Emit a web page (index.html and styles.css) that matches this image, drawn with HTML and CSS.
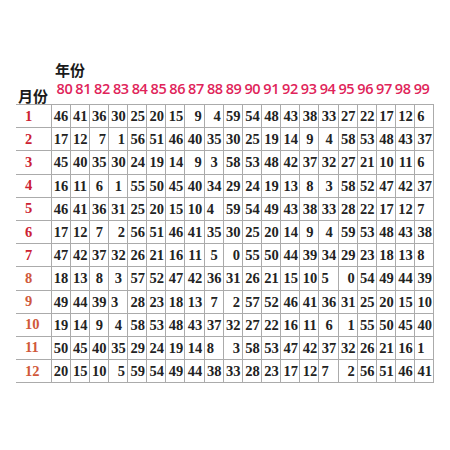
FILE: index.html
```html
<!DOCTYPE html>
<html>
<head>
<meta charset="utf-8">
<link rel="stylesheet" href="styles.css">
</head>
<body>
<div class="page">
  <div class="year-title">年份</div>
  <div class="head-row">
    <div class="month-title">月份</div>
    <div class="years">
      <span>80</span><span>81</span><span>82</span><span>83</span><span>84</span><span>85</span><span>86</span><span>87</span><span>88</span><span>89</span><span>90</span><span>91</span><span>92</span><span>93</span><span>94</span><span>95</span><span>96</span><span>97</span><span>98</span><span>99</span>
    </div>
  </div>
  <table class="grid">
    <colgroup><col class="mcol"><col span="20" class="dcol"></colgroup>
    <tr><th class="m a">1</th><td>46</td><td>41</td><td>36</td><td>30</td><td>25</td><td>20</td><td>15</td><td class="r">9</td><td class="r">4</td><td>59</td><td>54</td><td>48</td><td>43</td><td>38</td><td>33</td><td>27</td><td>22</td><td>17</td><td>12</td><td class="l">6</td></tr>
    <tr><th class="m a">2</th><td>17</td><td>12</td><td class="r">7</td><td class="r">1</td><td>56</td><td>51</td><td>46</td><td>40</td><td>35</td><td>30</td><td>25</td><td>19</td><td>14</td><td>9</td><td>4</td><td>58</td><td>53</td><td>48</td><td>43</td><td>37</td></tr>
    <tr><th class="m a">3</th><td>45</td><td>40</td><td>35</td><td>30</td><td>24</td><td>19</td><td>14</td><td class="r">9</td><td>3</td><td>58</td><td>53</td><td>48</td><td>42</td><td>37</td><td>32</td><td>27</td><td>21</td><td>10</td><td>11</td><td class="l">6</td></tr>
    <tr><th class="m a">4</th><td>16</td><td>11</td><td>6</td><td>1</td><td>55</td><td>50</td><td>45</td><td>40</td><td>34</td><td>29</td><td>24</td><td>19</td><td>13</td><td>8</td><td>3</td><td>58</td><td>52</td><td>47</td><td>42</td><td>37</td></tr>
    <tr><th class="m a">5</th><td>46</td><td>41</td><td>36</td><td>31</td><td>25</td><td>20</td><td>15</td><td>10</td><td class="l">4</td><td>59</td><td>54</td><td>49</td><td>43</td><td>38</td><td>33</td><td>28</td><td>22</td><td>17</td><td>12</td><td class="l">7</td></tr>
    <tr><th class="m a">6</th><td>17</td><td>12</td><td>7</td><td class="r">2</td><td>56</td><td>51</td><td>46</td><td>41</td><td>35</td><td>30</td><td>25</td><td>20</td><td>14</td><td>9</td><td>4</td><td>59</td><td>53</td><td>48</td><td>43</td><td>38</td></tr>
    <tr><th class="m a">7</th><td>47</td><td>42</td><td>37</td><td>32</td><td>26</td><td>21</td><td>16</td><td>11</td><td>5</td><td class="r">0</td><td>55</td><td>50</td><td>44</td><td>39</td><td>34</td><td>29</td><td>23</td><td>18</td><td>13</td><td class="l">8</td></tr>
    <tr><th class="m b">8</th><td>18</td><td>13</td><td>8</td><td>3</td><td>57</td><td>52</td><td>47</td><td>42</td><td>36</td><td>31</td><td>26</td><td>21</td><td>15</td><td>10</td><td class="l">5</td><td class="r">0</td><td>54</td><td>49</td><td>44</td><td>39</td></tr>
    <tr><th class="m b">9</th><td>49</td><td>44</td><td>39</td><td class="l">3</td><td>28</td><td>23</td><td>18</td><td>13</td><td>7</td><td class="r">2</td><td>57</td><td>52</td><td>46</td><td>41</td><td>36</td><td>31</td><td>25</td><td>20</td><td>15</td><td>10</td></tr>
    <tr><th class="m b">10</th><td>19</td><td>14</td><td>9</td><td>4</td><td>58</td><td>53</td><td>48</td><td>43</td><td>37</td><td>32</td><td>27</td><td>22</td><td>16</td><td>11</td><td>6</td><td class="r">1</td><td>55</td><td>50</td><td>45</td><td>40</td></tr>
    <tr><th class="m b">11</th><td>50</td><td>45</td><td>40</td><td>35</td><td>29</td><td>24</td><td>19</td><td>14</td><td class="l">8</td><td class="r">3</td><td>58</td><td>53</td><td>47</td><td>42</td><td>37</td><td>32</td><td>26</td><td>21</td><td>16</td><td class="l">1</td></tr>
    <tr><th class="m b">12</th><td>20</td><td>15</td><td>10</td><td class="r">5</td><td>59</td><td>54</td><td>49</td><td>44</td><td>38</td><td>33</td><td>28</td><td>23</td><td>17</td><td>12</td><td class="l">7</td><td class="r">2</td><td>56</td><td>51</td><td>46</td><td>41</td></tr>
  </table>
</div>
</body>
</html>
```
FILE: styles.css
```css
html, body {
  margin: 0;
  padding: 0;
  background: #ffffff;
}

.page {
  padding: 61px 0 0 16px;
  font-family: "Liberation Serif", "Noto Sans CJK SC", serif;
}

.year-title {
  margin-left: 39px;
  font-family: "Noto Sans CJK SC", sans-serif;
  font-weight: 700;
  font-size: 15px;
  line-height: 18px;
  height: 18px;
  color: #1a1a1a;
}

.head-row {
  display: flex;
  height: 25px;
}

.month-title {
  width: 39px;
  align-self: flex-end;
  font-family: "Noto Sans CJK SC", sans-serif;
  font-weight: 700;
  font-size: 15px;
  line-height: 16px;
  color: #1a1a1a;
  margin-left: 2px;
  margin-right: -2px;
}

.years {
  display: grid;
  grid-template-columns: repeat(20, 18.8px);
  margin-top: 2px;
  height: 16px;
  font-family: "Open Sans", sans-serif;
  font-weight: 600;
  font-size: 14.5px;
  line-height: 16px;
  color: #e0245a;
}

.years span {
  text-align: center;
  letter-spacing: -0.4px;
}

.grid {
  border-collapse: collapse;
  table-layout: fixed;
  width: 418px;
}

.mcol {
  width: 35px;
}

.dcol {
  width: 19.15px;
}

.grid tr {
  height: 23.2px;
}

.grid td {
  border: 1px solid #ababab;
  padding: 1px 0 0 1px;
  text-align: center;
  font-weight: 700;
  font-size: 14.5px;
  color: #222222;
  white-space: nowrap;
  overflow: visible;
}

.grid th.m {
  border-top: 1px solid #ababab;
  border-bottom: 1px solid #ababab;
  border-right: 1px solid #ababab;
  border-left: none;
  padding: 0 0 0 9px;
  text-align: left;
  font-weight: 700;
  font-size: 14.5px;
}

.grid th.a {
  color: #cc2233;
}

.grid th.b {
  color: #d0583a;
}

.grid td.l {
  text-align: left;
  padding-left: 2px;
}

.grid td.r {
  text-align: right;
  padding-right: 2px;
}
```
